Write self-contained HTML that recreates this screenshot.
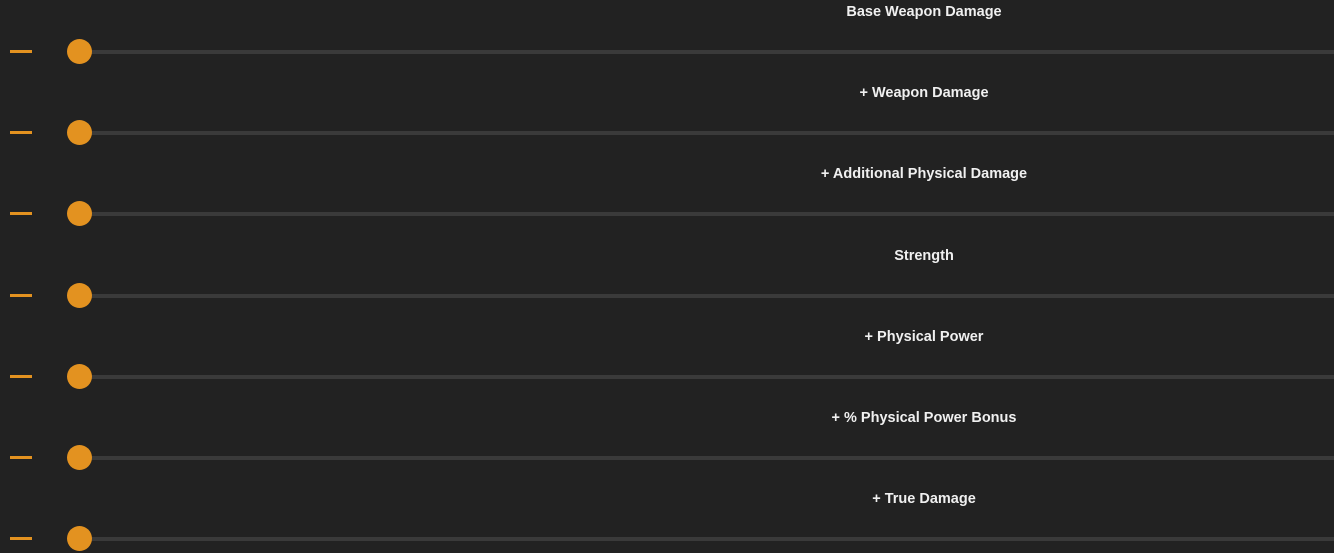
<!DOCTYPE html><html><head><style>
body{margin:0;width:1334px;height:553px;background:#222;overflow:hidden;font-family:"Liberation Sans",sans-serif;position:relative}
.r{position:absolute;left:0;width:1334px;height:0}
.d{position:absolute;left:10px;top:-2px;width:22px;height:3px;background:#e39220}
.t{position:absolute;left:80px;right:0;top:-2px;height:4px;background:#3a3a3a}
.c{position:absolute;left:67px;top:-13px;width:25px;height:25px;border-radius:50%;background:#e39220}
.l{position:absolute;left:524px;width:800px;text-align:center;top:-49px;color:#f0f0f0;font-size:14.5px;font-weight:bold;line-height:18px}
</style></head><body>
<div class="r" style="top:52px"><div class="l">Base Weapon Damage</div><div class="d"></div><div class="t"></div><div class="c"></div></div>
<div class="r" style="top:133px"><div class="l">+ Weapon Damage</div><div class="d"></div><div class="t"></div><div class="c"></div></div>
<div class="r" style="top:214px"><div class="l">+ Additional Physical Damage</div><div class="d"></div><div class="t"></div><div class="c"></div></div>
<div class="r" style="top:296px"><div class="l">Strength</div><div class="d"></div><div class="t"></div><div class="c"></div></div>
<div class="r" style="top:377px"><div class="l">+ Physical Power</div><div class="d"></div><div class="t"></div><div class="c"></div></div>
<div class="r" style="top:458px"><div class="l">+ % Physical Power Bonus</div><div class="d"></div><div class="t"></div><div class="c"></div></div>
<div class="r" style="top:539px"><div class="l">+ True Damage</div><div class="d"></div><div class="t"></div><div class="c"></div></div>
</body></html>
